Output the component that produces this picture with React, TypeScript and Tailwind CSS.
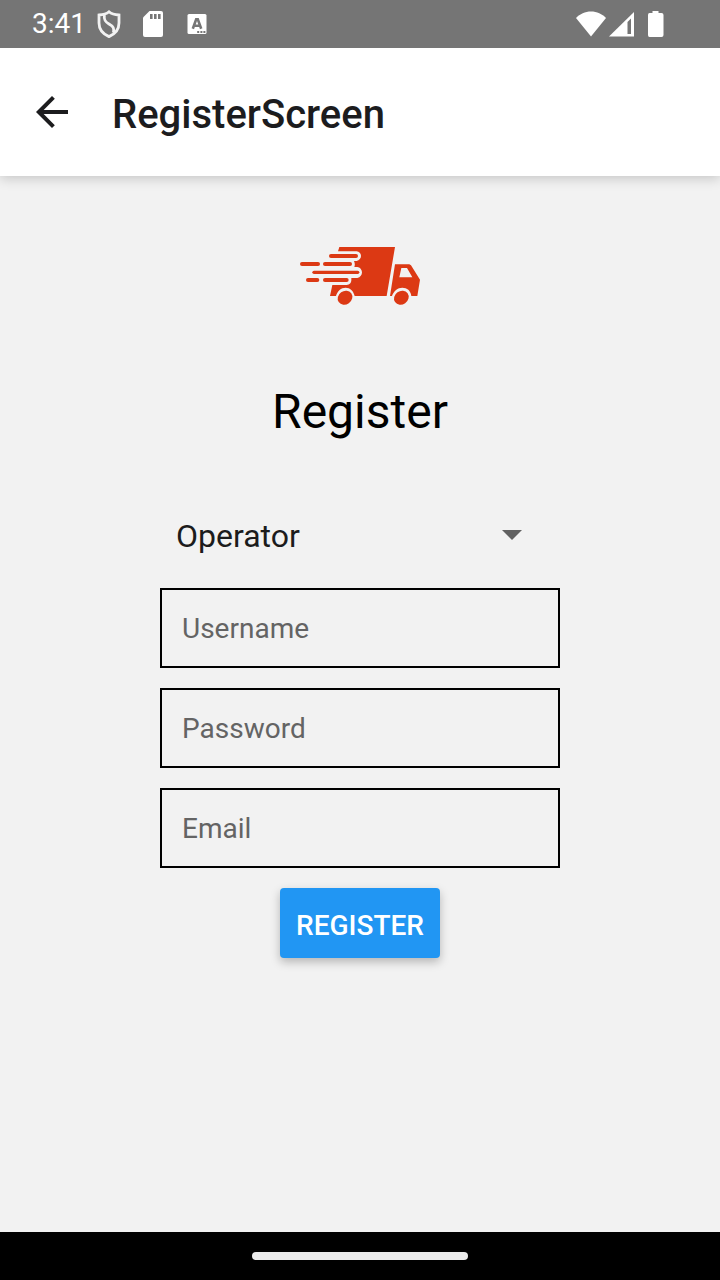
import React from 'react';

function StatusBar() {
  return (
    <div className="relative z-10 flex h-12 shrink-0 items-center bg-[#757575] pl-8 pr-12 text-white">
      <span className="text-[28px] leading-8">3:41</span>
      <svg className="ml-[11px] h-7 w-6" viewBox="0 0 24 28" fill="none" stroke="#f2f2f2" strokeWidth="2.8" aria-hidden="true">
        <path d="M12 1.8 C9.4 4 5.6 4.8 2 5 V13 C2 19.5 6 24 12 26.6 C18 24 22 19.5 22 13 V5 C18.4 4.8 14.6 4 12 1.8 Z" />
        <path d="M7.4 5 C6.6 10 8.6 12 12 14 C16.4 16.5 17.4 18.2 16.4 22.6" />
      </svg>
      <svg className="ml-5 h-7 w-6" viewBox="0 0 24 28" aria-hidden="true">
        <path fill="#fff" d="M8.5 1 H20 Q22 1 22 3 V25 Q22 27 20 27 H4 Q2 27 2 25 V7.5 Z" />
        <path fill="#757575" d="M9 4 h2.6 v5 H9z M13 4 h2.6 v5 H13z M17 4 h2.6 v5 H17z" />
      </svg>
      <svg className="ml-5 h-7 w-6" viewBox="0 0 24 28" aria-hidden="true">
        <rect x="2.5" y="4" width="19" height="20" rx="1.5" fill="#fff" />
        <path fill="none" stroke="#757575" strokeWidth="2.6" d="M7.8 18.8 L11.2 9.2 H12.8 L16.2 18.8 M9.2 15.8 H15" />
        <path fill="#757575" d="M12.2 21 h2 v2 h-2z M15.4 21 h2 v2 h-2z M18.4 21 h2 v2 h-2z" />
      </svg>
      <div className="ml-auto flex items-center">
        <svg className="h-7 w-8" viewBox="1 0 32 28" aria-hidden="true">
          <path fill="#fff" d="M16 26.5 L1 8 C5 4 10 1.5 16 1.5 C22 1.5 27 4 31 8 Z" />
        </svg>
        <svg className="h-7 w-7" viewBox="-1 0 28 28" aria-hidden="true">
          <path fill="#fff" d="M0 26.5 L25 2 V26.5 Z" />
          <path fill="#757575" d="M18.5 12 L22 8.5 V24 H18.5 Z" />
        </svg>
        <svg className="ml-3 h-7 w-6" viewBox="1 0 24 28" aria-hidden="true">
          <path fill="#fff" d="M5.5 1 H11.5 V3 H14.5 Q16.5 3 16.5 5 V25 Q16.5 27 14.5 27 H2.5 Q1 27 1 25 V5 Q1 3 2.5 3 H5.5 Z" />
        </svg>
      </div>
    </div>
  );
}

function TopBar() {
  return (
    <header className="relative flex h-32 shrink-0 items-center gap-9 bg-white pl-7 shadow-[0_2px_12px_rgba(0,0,0,0.2)]">
      <button type="button" aria-label="Back" className="size-12">
        <svg className="size-12" viewBox="0 0 24 24" fill="#1c1c1e" aria-hidden="true">
          <path d="M20 11H7.83l5.59-5.59L12 4l-8 8 8 8 1.41-1.41L7.83 13H20z" />
        </svg>
      </button>
      <h1 className="pt-1.5 text-[40px] leading-12 font-medium text-[#1c1c1e]">RegisterScreen</h1>
    </header>
  );
}

function TruckLogo() {
  return (
    <svg className="h-20 w-[140px]" viewBox="0 0 420 240" role="img" aria-label="Delivery truck">
      <g fill="#dc3914">
        <path d="M148 33 H315 L290 180 H194 C190 164 180 155 167 155 C153 155 142 165 138 180 H120 L127 147 H170 C179 147 184 141 184 133 V126 H202 C211 124 216 117 216 109 C216 101 210 94 202 93 H193 C195 89 195 81 192 75 H200 C208 73 213 67 213 60 C213 52 207 47 200 46 H144 Z" />
        <path
          fillRule="evenodd"
          d="M315 85 H358 L363 88 L390 131 L382 180 H364 C362 163 351 155 337 155 C323 155 311 165 306 180 H300 Z M334 96 L328 124 H367 L351 96 Z"
        />
        <ellipse cx="165" cy="185" rx="23" ry="20" transform="rotate(-35 165 185)" />
        <ellipse cx="334" cy="185" rx="23" ry="20" transform="rotate(-35 334 185)" />
      </g>
      <g stroke="#dc3914" strokeWidth="12" strokeLinecap="round">
        <path d="M123 60 H198" />
        <path d="M36 84 H84" />
        <path d="M105 84 H180" />
        <path d="M72 109 H203" strokeWidth="10" />
        <path d="M54 132 H82" />
        <path d="M105 132 H170" />
      </g>
    </svg>
  );
}

const fields = [
  { id: 'username', label: 'Username', type: 'text' },
  { id: 'password', label: 'Password', type: 'password' },
  { id: 'email', label: 'Email', type: 'email' },
];

function RegisterForm() {
  return (
    <form className="flex w-full max-w-[400px] flex-col items-center gap-5" onSubmit={(e) => e.preventDefault()}>
      <div className="grid w-full items-center">
        <select
          aria-label="Role"
          defaultValue="Operator"
          className="col-start-1 row-start-1 h-16 w-full appearance-none bg-transparent pl-4 text-[32px] leading-10 text-[#1c1c1c]"
        >
          <option>Operator</option>
          <option>Customer</option>
        </select>
        <svg className="pointer-events-none col-start-1 row-start-1 mr-9 h-3 w-6 justify-self-end" viewBox="0 0 24 12" aria-hidden="true">
          <path d="M2 0 H22 L12 10 Z" fill="#616161" />
        </svg>
      </div>
      {fields.map((f) => (
        <input
          key={f.id}
          id={f.id}
          type={f.type}
          aria-label={f.label}
          placeholder={f.label}
          className="h-20 w-full border-2 border-black bg-transparent px-5 text-[28px] text-black placeholder:text-[#646464]"
        />
      ))}
      <button
        type="submit"
        className="rounded bg-[#2196f3] px-4 pt-5 pb-3.5 text-[28px] leading-9 font-medium text-white shadow-[0_4px_10px_rgba(0,0,0,0.25)]"
      >
        REGISTER
      </button>
    </form>
  );
}

export default function App() {
  return (
    <div className="flex min-h-screen flex-col bg-[#f2f2f2] font-[Roboto,sans-serif]">
      <StatusBar />
      <TopBar />
      <main className="flex flex-1 flex-col items-center px-4 pt-15">
        <TruckLogo />
        <h2 className="mt-16 pt-0.5 text-[48px] leading-15 text-black">Register</h2>
        <div className="mt-[62px] flex w-full justify-center">
          <RegisterForm />
        </div>
      </main>
      <nav className="flex h-12 shrink-0 items-center justify-center bg-black" aria-label="System">
        <span className="h-2 w-54 rounded-full bg-[#ebebeb]" />
      </nav>
    </div>
  );
}
